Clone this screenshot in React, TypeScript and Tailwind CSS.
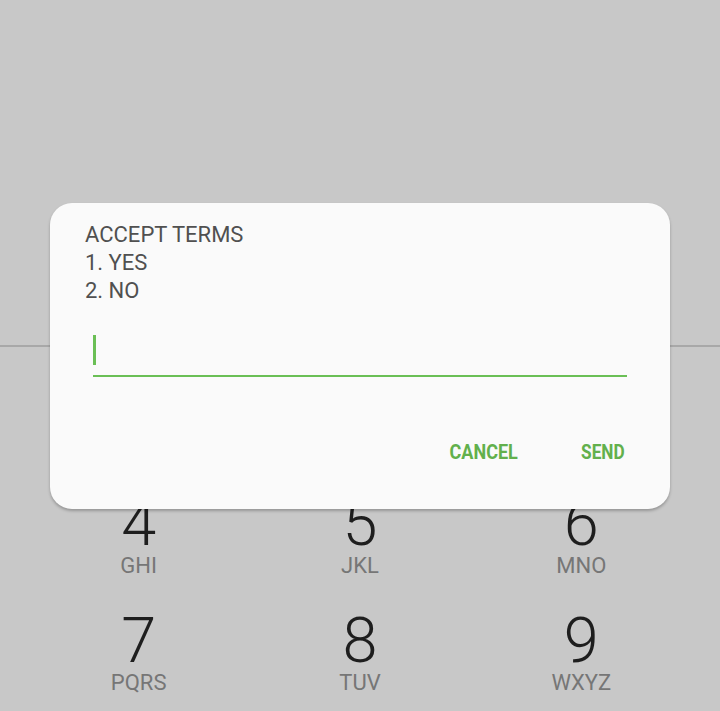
import React from "react";

const keys = [
  { digit: "1", letters: "" },
  { digit: "2", letters: "ABC" },
  { digit: "3", letters: "DEF" },
  { digit: "4", letters: "GHI" },
  { digit: "5", letters: "JKL" },
  { digit: "6", letters: "MNO" },
  { digit: "7", letters: "PQRS" },
  { digit: "8", letters: "TUV" },
  { digit: "9", letters: "WXYZ" },
];

const Key = ({ digit, letters, hidden }: { digit: string; letters: string; hidden?: boolean }) => (
  <div className={"flex h-[117px] flex-col items-center pt-[1px]" + (hidden ? " invisible" : "")}>
    <span className="text-[63px] font-light leading-[61px] text-[#1e1e1e]">{digit}</span>
    <span className="mt-[1px] text-[22px] leading-none text-[#767676]">{letters}</span>
  </div>
);

const App = () => {
  return (
    <div
      className="relative h-[711px] w-[720px] overflow-hidden bg-[#c8c8c8]"
      style={{ fontFamily: "Roboto, 'Noto Sans', sans-serif" }}
    >
      <div className="h-[345px]" />
      <div className="h-[2px] bg-[#a8a8a8]" />
      <div className="grid grid-cols-3 px-[28px] pt-[28px]">
        {keys.map((k, i) => (
          <Key key={k.digit} digit={k.digit} letters={k.letters} hidden={i < 3} />
        ))}
      </div>

      {/* USSD dialog */}
      <div className="absolute left-[50px] top-[203px] h-[306px] w-[620px] rounded-[22px] bg-[#fafafa] pt-[18px] shadow-[0_2px_3px_rgba(0,0,0,0.25)]">
        <div className="px-[35px] text-[22px] leading-[28px] text-[#505050]">
          <div>ACCEPT TERMS</div>
          <div>1. YES</div>
          <div>2. NO</div>
        </div>

        <div className="mx-[43px] mt-[30px] h-[42px] border-b-2 border-[#6abf55]">
          <div className="h-[30px] w-[3px] bg-[#6abf55]" />
        </div>

        <div className="mt-[65px] flex justify-end gap-[57px] pr-[45px] text-[20px] font-bold leading-none text-[#62b04c]">
          <span className="inline-block origin-right scale-x-[0.9]">CANCEL</span>
          <span className="inline-block origin-right scale-x-[0.86]">SEND</span>
        </div>
      </div>
    </div>
  );
};

export default App;
